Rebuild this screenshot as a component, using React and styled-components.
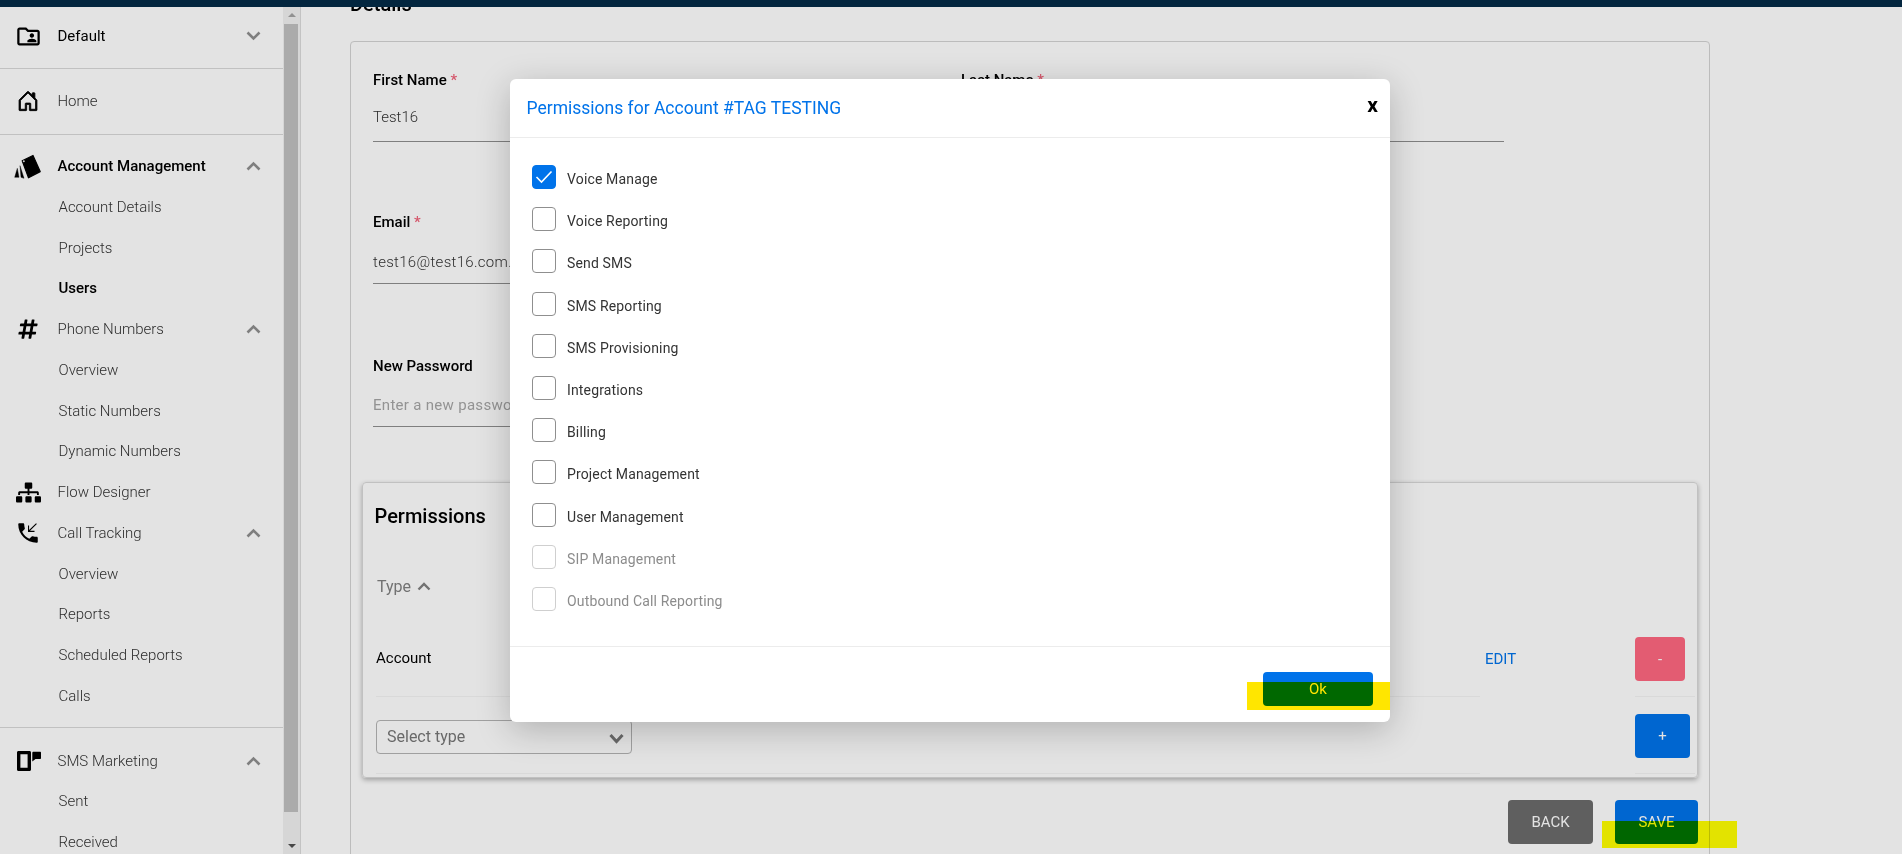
import React from "react";
import styled, { createGlobalStyle } from "styled-components";
import { FaHashtag, FaSitemap } from "react-icons/fa";
import { MdOutlineFolderShared, MdPhoneCallback } from "react-icons/md";
import { BsHouseDoor } from "react-icons/bs";

const Global = createGlobalStyle`
  html, body { margin: 0; padding: 0; background: #fff; }
  body { font-family: Roboto, "Liberation Sans", sans-serif; overflow: hidden; }
  * { box-sizing: border-box; }
`;

const Frame = styled.div`
  position: relative; width: 1902px; height: 854px; overflow: hidden;
  display: flex; flex-direction: column; background: #fff;
`;
const TopBar = styled.div`height: 7px; background: #042b47; flex: none; position: relative; z-index: 2;`;
const Body = styled.div`display: flex; flex: 1; min-height: 0;`;

const Sidebar = styled.nav`width: 283px; flex: none; overflow: hidden;`;
const Section = styled.div`
  padding: ${p => p.$pt}px 0 ${p => p.$pb}px;
  border-bottom: ${p => (p.$line ? "1px solid #d9d9d9" : "none")};
`;
const Row = styled.div`
  height: 40.75px; display: flex; align-items: center; position: relative;
  padding-left: ${p => (p.$sub ? 58.5 : 57.5)}px;
  font-size: 15px; letter-spacing: 0;
  font-weight: ${p => (p.$weight || 300)};
  color: ${p => (p.$weight ? "#000" : "#333")};
`;
const IconSlot = styled.span`
  position: absolute; left: 14px; width: 28px; height: 28px;
  display: flex; align-items: center; justify-content: center; color: #000;
`;
const Chevron = styled.svg`
  position: absolute; left: 246px; width: 15px; height: 10px;
  fill: none; stroke: #8f8f8f; stroke-width: 2.6;
`;

const ScrollTrack = styled.div`
  width: 18px; flex: none; background: #f1f1f1; border-right: 1px solid #dcdcdc;
  display: flex; flex-direction: column; align-items: center; padding-left: 0;
`;
const Arrow = styled.div`
  width: 0; height: 0; margin: 6px 0; flex: none;
  border-left: 4px solid transparent; border-right: 4px solid transparent;
  ${p => (p.$down ? "border-top: 4px solid #505050;" : "border-bottom: 4px solid #a3a3a3;")}
`;
const Thumb = styled.div`width: 14px; height: 788px; background: #c1c1c1; margin: 1px 0 auto; margin-left: -2px;`;

const Main = styled.main`flex: 1; min-width: 0; overflow: hidden; padding-left: 49px;`;
const Scrolled = styled.div`width: 1360px; margin-top: -15px;`;
const Heading = styled.h2`
  margin: 0; height: 49px; font-size: 20px; line-height: 24px; font-weight: 500; color: #000;
`;
const Card = styled.section`
  border: 1px solid #d4d4d4; border-radius: 4px; padding: 0 11px 60px 11px; height: 900px;
`;
const FieldGrid = styled.div`
  display: grid; grid-template-columns: 543px 543px; column-gap: 45px; padding: 26px 0 0 11px;
`;
const Field = styled.div`height: ${p => p.$h}px;`;
const Label = styled.label`
  display: block; height: 24px; line-height: 24px; font-size: 15px; font-weight: 500; color: #000;
`;
const Star = styled.span`color: #f0637a;`;
const Value = styled.div`
  height: ${p => p.$h || 37}px; margin-top: 13px; border-bottom: 1px solid #8f8f8f;
  padding-top: ${p => p.$pt || 0}px;
  font-size: 15px; line-height: 24px; font-weight: ${p => (p.$ph ? 400 : 300)};
  letter-spacing: ${p => (p.$wide ? ".3px" : "0")};
  color: ${p => (p.$ph ? "#a6a6a6" : "#333")};
`;

const PermCard = styled.section`
  height: 296px; border: 1px solid #d9d9d9; border-radius: 4px;
  padding: 21px 0 0 13px; box-shadow: 0 2px 5px rgba(0,0,0,.3);
`;
const PermTitle = styled.h3`
  margin: 0 0 0 -1.5px; height: 24px; line-height: 24px; font-size: 20px; font-weight: 500; color: #000;
`;
const TypeHead = styled.div`
  display: flex; align-items: center; gap: 6px; height: 48px; margin-top: 34px; padding-left: 1px;
  font-size: 16px; color: #808080; font-weight: 400;
`;
const TableRow = styled.div`
  display: grid; grid-template-columns: 1104px 155px 60px; height: ${p => p.$h}px;
`;
const Cell = styled.div`
  display: flex; align-items: center; font-size: 15px; color: #000;
  border-bottom: ${p => (p.$line ? "1px solid #f4f4f4" : "none")};
  padding-top: ${p => p.$pt || 0}px;
`;
const EditLink = styled.a`color: #0073ea; font-size: 15px; font-weight: 400; padding-left: 5px;`;
const SquareBtn = styled.button`
  width: ${p => p.$w}px; height: 44px; border: 0; border-radius: 4px; padding: 0; flex: none;
  background: ${p => p.$bg}; color: #fff; font: 400 15px Roboto, sans-serif;
`;
const SelectBox = styled.div`
  width: 256px; height: 34px; border: 1px solid #b4b4b4; border-radius: 4px; position: relative;
  display: flex; align-items: center; padding-left: 10px; font-size: 16px; color: #777; font-weight: 400;
`;
const SelectChevron = styled.svg`
  position: absolute; right: 7px; top: 12px; width: 15px; height: 11px;
  fill: none; stroke: #777; stroke-width: 3;
`;
const Actions = styled.div`display: flex; justify-content: flex-end; gap: 22px; margin-top: 22px;`;
const ActionBtn = styled.button`
  width: ${p => p.$w}px; height: 44px; border: 0; border-radius: 4px;
  background: ${p => p.$bg}; color: #fff; font: 400 15px Roboto, sans-serif;
`;

const Backdrop = styled.div`position: absolute; inset: 0; background: rgba(0,0,0,.11); z-index: 3;`;
const Modal = styled.div`
  position: absolute; left: 510px; top: 79px; width: 880px; height: 643px; z-index: 4;
  background: #fff; border-radius: 6px; box-shadow: 0 8px 34px rgba(0,0,0,.22);
  display: flex; flex-direction: column;
`;
const ModalHeader = styled.header`
  height: 59px; flex: none; border-bottom: 1px solid #ececec; display: flex; align-items: center;
  justify-content: space-between; padding: 0 12px 0 16.5px;
`;
const ModalTitle = styled.h4`margin: 0; font-size: 17.5px; line-height: 24px; font-weight: 400; color: #0073ea;`;
const Close = styled.button`
  border: 0; background: none; padding: 0 0 6px; font: 700 21px Roboto, sans-serif; color: #000;
`;
const ModalBody = styled.div`flex: 1; padding: 27px 22px 0; display: flex; flex-direction: column;`;
const CheckRow = styled.div`
  height: 42.2px; flex: none; display: flex; align-items: flex-start; gap: 11px;
  font-size: 14px; line-height: 24px; font-weight: 400; letter-spacing: .15px;
  color: ${p => (p.$off ? "#8c8c8c" : "#333")};
`;
const Box = styled.span`
  width: 24px; height: 24px; border-radius: 4px; flex: none; display: flex; align-items: center; justify-content: center;
  border: 1px solid ${p => (p.$on ? "#0073ea" : p.$off ? "#cfcfcf" : "#8f8f8f")};
  background: ${p => (p.$on ? "#0073ea" : "#fff")};
`;
const CheckLabel = styled.span`padding-top: 2px;`;
const ModalFooter = styled.footer`
  height: 76px; flex: none; border-top: 1px solid #ececec; display: flex; justify-content: flex-end;
  padding: 25px 17px 0 0;
`;
const OkBtn = styled.button`
  width: 110px; height: 34px; border: 0; border-radius: 4px; background: #0073ea; color: #fff;
  font: 400 15px Roboto, sans-serif;
`;
const Highlight = styled.div`
  position: absolute; z-index: 5; mix-blend-mode: multiply; background: ${p => p.$c};
  left: ${p => p.$l}px; top: ${p => p.$t}px; width: ${p => p.$w}px; height: ${p => p.$h}px;
`;

const Up = () => <Chevron viewBox="0 0 15 10"><path d="M1.500 8.500 7.500 2.500 13.500 8.500" /></Chevron>;
const Down = () => <Chevron viewBox="0 0 15 10"><path d="M1.500 1.500 7.500 7.500 13.500 1.500" /></Chevron>;

const CardsIcon = () => (
  <svg width="28" height="28" viewBox="0 0 28 28" fill="#000" stroke="#000" strokeLinejoin="round">
    <path strokeWidth="1.200" d="M8.200 8.900 19 3.500 26.200 19.600 14.500 25.800z" />
    <circle cx="9.800" cy="9.300" r="1" fill="#e3e3e3" stroke="none" />
    <path strokeWidth=".4" d="M6 13.700 10 26.300 7 25.300z" />
    <path strokeWidth=".4" d="M3.300 16.300 5 25.300 .7 25.300z" />
  </svg>
);
const SmsIcon = () => (
  <svg width="28" height="28" viewBox="0 0 28 28" fill="#000">
    <path fillRule="evenodd" d="M4.500 4h11c.9 0 1.500.7 1.500 1.500v17c0 .9-.6 1.500-1.500 1.500h-11C3.600 24 3 23.400 3 22.500v-17C3 4.700 3.600 4 4.500 4zM6.400 7.200v13.600h7.200V7.200z" />
    <path d="M19.500 4.700H26c.6 0 1 .4 1 1V11c0 .6-.4 1-1 1h-4.500l-3.200 2.600V5.900c0-.7.500-1.200 1.200-1.200z" />
  </svg>
);

const sections = [
  { pt: 9, pb: 11.6, line: true, rows: [{ t: "Default", icon: <MdOutlineFolderShared size={27} />, weight: 400, chev: "d" }] },
  { pt: 11, pb: 12.6, line: true, rows: [{ t: "Home", icon: <BsHouseDoor size={22} style={{ strokeWidth: 0.6, stroke: "#000" }} /> }] },
  { pt: 11, pb: 11, line: true, rows: [
    { t: "Account Management", icon: <CardsIcon />, weight: 500, chev: "u" },
    { t: "Account Details", sub: true }, { t: "Projects", sub: true }, { t: "Users", sub: true, weight: 500 },
    { t: "Phone Numbers", icon: <FaHashtag size={22} />, chev: "u" },
    { t: "Overview", sub: true }, { t: "Static Numbers", sub: true }, { t: "Dynamic Numbers", sub: true },
    { t: "Flow Designer", icon: <FaSitemap size={25} /> },
    { t: "Call Tracking", icon: <MdPhoneCallback size={26} />, chev: "u" },
    { t: "Overview", sub: true }, { t: "Reports", sub: true }, { t: "Scheduled Reports", sub: true }, { t: "Calls", sub: true },
  ] },
  { pt: 12, pb: 0, rows: [
    { t: "SMS Marketing", icon: <SmsIcon />, chev: "u" },
    { t: "Sent", sub: true }, { t: "Received", sub: true },
  ] },
];

const perms = ["Voice Manage", "Voice Reporting", "Send SMS", "SMS Reporting", "SMS Provisioning", "Integrations", "Billing", "Project Management", "User Management", "SIP Management", "Outbound Call Reporting"];

export default function App() {
  return (
    <Frame>
      <Global />
      <TopBar />
      <Body>
        <Sidebar>
          {sections.map((s, i) => (
            <Section key={i} $pt={s.pt} $pb={s.pb} $line={s.line}>
              {s.rows.map((r, j) => (
                <Row key={j} $sub={r.sub} $weight={r.weight}>
                  {r.icon && <IconSlot>{r.icon}</IconSlot>}
                  {r.t}
                  {r.chev === "u" && <Up />}
                  {r.chev === "d" && <Down />}
                </Row>
              ))}
            </Section>
          ))}
        </Sidebar>
        <ScrollTrack>
          <Arrow />
          <Thumb />
          <Arrow $down />
        </ScrollTrack>
        <Main>
          <Scrolled>
            <Heading>Details</Heading>
            <Card>
              <FieldGrid>
                <Field $h={142}><Label>First Name <Star>*</Star></Label><Value>Test16</Value></Field>
                <Field $h={142}><Label>Last Name <Star>*</Star></Label><Value /></Field>
                <Field $h={144}><Label>Email <Star>*</Star></Label><Value $wide $pt={3}>test16@test16.com.au</Value></Field>
                <Field $h={144} />
                <Field $h={128}><Label>New Password</Label><Value $ph $wide $pt={2} $h={36}>Enter a new password</Value></Field>
                <Field $h={128} />
              </FieldGrid>
              <PermCard>
                <PermTitle>Permissions</PermTitle>
                <TypeHead>
                  Type
                  <svg width="14" height="9" viewBox="0 0 14 9" fill="none" stroke="#808080" strokeWidth="2.400"><path d="M1.500 7.500 7 2l5.500 5.500" /></svg>
                </TypeHead>
                <TableRow $h={87}>
                  <Cell $line $pt={10}>Account</Cell>
                  <Cell $pt={10}><EditLink>EDIT</EditLink></Cell>
                  <Cell $line $pt={12}><SquareBtn $w={50} $bg="#ff6880">-</SquareBtn></Cell>
                </TableRow>
                <TableRow $h={77}>
                  <Cell $line $pt={3}>
                    <SelectBox>
                      Select type
                      <SelectChevron viewBox="0 0 15 11"><path d="M1.500 2 7.500 8.500 13.500 2" /></SelectChevron>
                    </SelectBox>
                  </Cell>
                  <Cell />
                  <Cell $line $pt={1}><SquareBtn $w={55} $bg="#0073ea">+</SquareBtn></Cell>
                </TableRow>
              </PermCard>
              <Actions>
                <ActionBtn $w={85} $bg="#6b6b6b">BACK</ActionBtn>
                <ActionBtn $w={83} $bg="#0073ea">SAVE</ActionBtn>
              </Actions>
            </Card>
          </Scrolled>
        </Main>
      </Body>
      <Backdrop />
      <Modal>
        <ModalHeader>
          <ModalTitle>Permissions for Account #TAG TESTING</ModalTitle>
          <Close>x</Close>
        </ModalHeader>
        <ModalBody>
          {perms.map((p, i) => (
            <CheckRow key={p} $off={i > 8}>
              <Box $on={i === 0} $off={i > 8}>
                {i === 0 && <svg width="18" height="14" viewBox="0 0 18 14" fill="none" stroke="#fff" strokeWidth="1.600"><path d="M1.500 7 6.500 12 16.500 1.500" /></svg>}
              </Box>
              <CheckLabel>{p}</CheckLabel>
            </CheckRow>
          ))}
        </ModalBody>
        <ModalFooter><OkBtn>Ok</OkBtn></ModalFooter>
      </Modal>
      <Highlight $c="#ffe600" $l={1247} $t={682} $w={143} $h={28} />
      <Highlight $c="#ffff00" $l={1602} $t={821} $w={135} $h={27} />
    </Frame>
  );
}
